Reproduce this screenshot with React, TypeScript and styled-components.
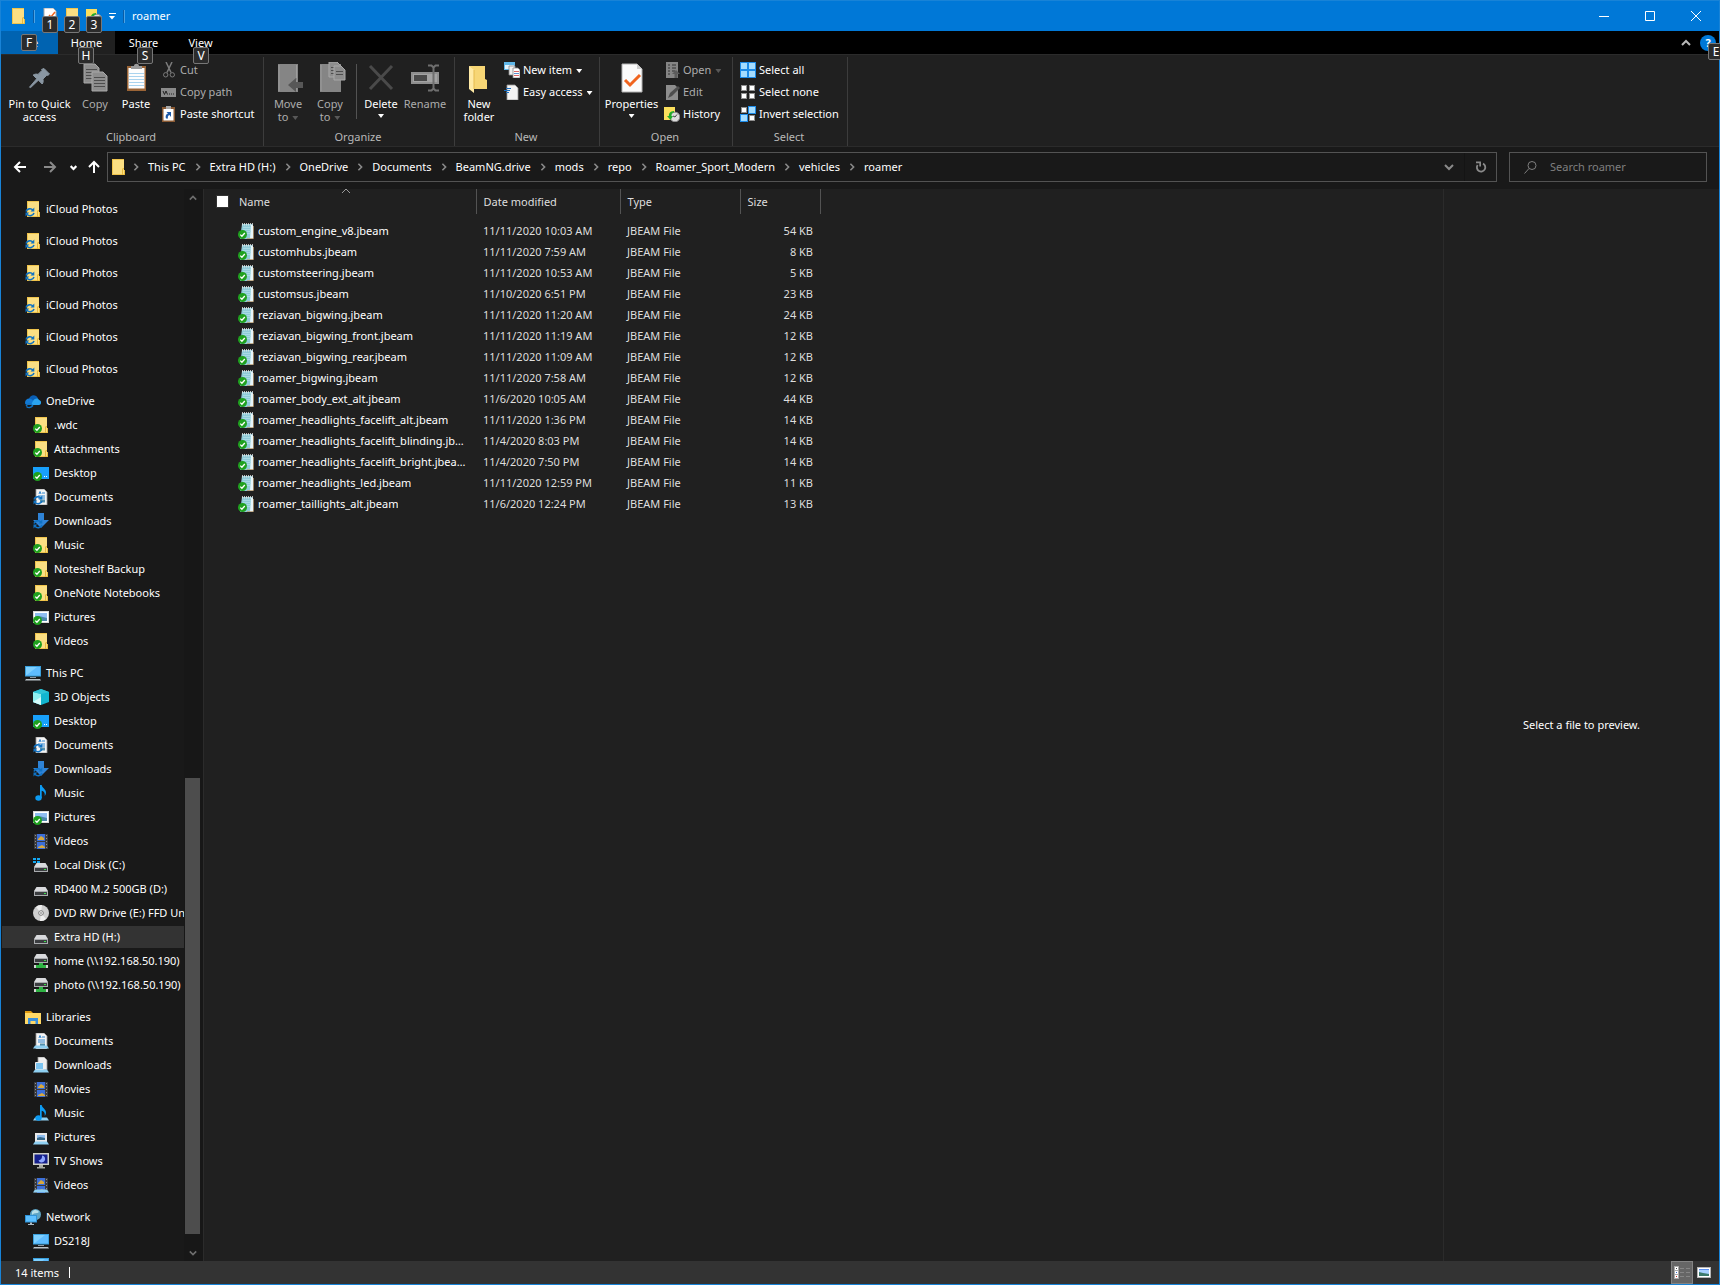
import React from "react";
import styled, { createGlobalStyle, css } from "styled-components";

const color = {
  accent: "#0078d7",
  edge: "#1883d7",
  panel: "#202020",
  chrome: "#191919",
  line: "#2b2b2b",
  box: "#535353",
  text: "#ffffff",
  dim: "#adadad",
};

const GlobalStyle = createGlobalStyle`
  *, *::before, *::after { box-sizing: border-box; }
  html, body { margin: 0; background: ${color.chrome}; overflow: hidden; }
  body, button, input, table {
    font-family: "Noto Sans", "Open Sans", "Segoe UI", sans-serif;
    font-size: 11px;
    line-height: 16px;
    color: ${color.text};
  }
  button { background: none; border: 0; padding: 0; margin: 0; }
  a { color: inherit; text-decoration: none; }
  ul, ol { list-style: none; margin: 0; padding: 0; }
  svg { display: block; flex: none; }
`;

const Window = styled.div`
  display: flex;
  flex-direction: column;
  height: 100vh;
  border: 1px solid ${color.edge};
  background: ${color.panel};
`;

/* ---------- Glyphs ---------- */

type IconName =
  | "folder" | "folderSync" | "folderOk" | "cloud" | "desktopOk" | "docSync" | "downSync" | "picOk"
  | "pc" | "cube" | "music" | "film" | "diskC" | "disk" | "dvd" | "net" | "libraries" | "docLib"
  | "downLib" | "musicLib" | "picLib" | "tv" | "filmLib" | "network" | "notepad"
  | "cut" | "copyPath" | "pasteShortcut" | "newItem" | "easyAccess" | "open" | "edit" | "history"
  | "selectAll" | "selectNone" | "invert" | "props";

const Ok = () => (
  <>
    <circle cx="4.5" cy="11.5" r="4.5" fill="#1fa11f" />
    <path d="M2.3 11.6l1.6 1.6 2.9-3.2" fill="none" stroke="#fff" strokeWidth="1.3" />
  </>
);
const Sync = () => (
  <>
    <path d="M1 10.5C2 7.5 6 6.8 8 9.3M9 12c-1 3-5 3.600-7 1.200" fill="none" stroke="#0f72c4" strokeWidth="1.6" />
    <path d="M9.300 6.500v4H5.500zM.5 15.500v-4h3.800z" fill="#0f72c4" />
  </>
);
const Folder = () => (
  <>
    <path d="M2 0h12v12l1 0v4H2z" fill="#fbdf83" />
    <path d="M2 .5h12M2.500 0v16M2 15.500h13" stroke="#f0c44c" fill="none" />
    <path d="M12 10h1.500v-1M12.500 10v6M14.500 11v5" stroke="#e8b93c" fill="none" />
  </>
);
const Screen = () => <path d="M0 2h16v12H0z" fill="#18a0fb" />;
const Page = () => (
  <>
    <path d="M3 0h8l3 3v13H3z" fill="#f4f4f4" stroke="#9a9a9a" strokeWidth=".8" />
    <path d="M6 5l1-2.500L8 5M9 4h3M5 7h7M5 9h7" stroke="#2f86d0" fill="none" />
    <path d="M7 10.500h5v3H7z" fill="#5590ad" />
  </>
);
const Down = () => <path d="M5 0h6v7h5l-8 8-8-8h5z" fill="#2f83d6" />;
const Picture = () => (
  <>
    <path d="M0 2h16v12H0z" fill="#d8d8d8" />
    <path d="M1 3h14v10H1z" fill="#fff" />
    <path d="M2 4h12v8H2z" fill="#8fbdf0" />
    <path d="M2 8l4-1 8 2v3H2z" fill="#4b86a8" />
  </>
);
const Film = () => (
  <>
    <path d="M1 1h14v15H1z" fill="#3a3a3c" />
    <path d="M4 1h8v7H4zM4 9h8v7H4z" fill="#3c6fd8" />
    <path d="M5 6l3-3 3 2v2H5zM5 14l4-2 3 2v1H5z" fill="#d9a93c" />
    <path d="M2.500 2v14M13.500 2v14" stroke="#8f8f8f" strokeDasharray="1 2" />
  </>
);
const Note = () => (
  <>
    <ellipse cx="5.500" cy="13" rx="3.200" ry="2.700" fill="#0c9bf2" />
    <path d="M7 0h1.700c.4 3 4.300 4 4.300 7.500 0 1.500-.6 2.500-1.300 3.500.5-3.400-1-4.600-3-5.200V13H7z" fill="#0c9bf2" />
  </>
);
const Disk = () => (
  <>
    <path d="M3.500 6h9L15 10H1z" fill="#d9dadd" />
    <path d="M1 10h14v5H1z" fill="#a9abae" />
    <path d="M2 11h12v3H2z" fill="#3b3d40" />
    <path d="M11 12h2v1h-2z" fill="#3de04b" />
  </>
);
const Stand = () => <path d="M2 12.500h12l2 3H0z" fill="#8fd0f2" />;
const Display = () => (
  <>
    <path d="M0 1h16v10.500H0z" fill="#3aa0dc" />
    <path d="M1 2h14v8.500H1z" fill="#5ebcff" />
    <path d="M1 10.500V2h11z" fill="#7fd0ff" />
    <path d="M5 12h6v1H5z" fill="#8f9aa3" />
    <path d="M1 14h14l1 1.500H0z" fill="#b9c3ca" />
  </>
);
const Tile = ({ x, y, on }: { x: number; y: number; on?: boolean }) => (
  <>
    <rect x={x} y={y} width={on ? 8 : 6} height={on ? 8 : 6} fill={on ? "#1d8be8" : "#8f8f8f"} />
    <rect x={x + 1} y={y + 1} width={on ? 6 : 4} height={on ? 6 : 4} fill={on ? "#a4dcff" : "#fff"} />
  </>
);

const glyphs: Record<IconName, React.ReactNode> = {
  folder: <Folder />,
  folderSync: <><Folder /><Sync /></>,
  folderOk: <><Folder /><Ok /></>,
  cloud: (
    <>
      <path d="M4 6C5 1.500 11 .5 13 5.500L9 9z" fill="#0a5fb5" />
      <path d="M0 10c0-4 4-5.500 7-3.500L12 12H3c-2 0-3-.8-3-2z" fill="#1279d4" />
      <path d="M8 8c2-3 5-3 6-1 3 .5 2.600 5 0 5H6z" fill="#2aa2ee" />
      <path d="M1 13c2-3 5-3 7 0M8 12.500c-2 2.500-5 2.500-6.500 1" fill="none" stroke="#0f72c4" strokeWidth="1.300" />
    </>
  ),
  desktopOk: <><Screen /><path d="M11 11.500h1M13 11.500h1" stroke="#fff" /><Ok /></>,
  docSync: <><Page /><Sync /></>,
  downSync: <><Down /><Sync /></>,
  picOk: <><Picture /><Ok /></>,
  pc: <Display />,
  cube: (
    <>
      <path d="M8 0l8 3v10l-8 3-8-3V3z" fill="#12b5cf" />
      <path d="M0 3l8 2v11l-8-3z" fill="#8ff0f0" />
      <path d="M8 0l8 3-8 2-8-2z" fill="#2fc3d6" />
      <path d="M0 13l8-5v8z" fill="#d5fbfa" />
    </>
  ),
  music: <Note />,
  film: <Film />,
  diskC: <><Disk /><path d="M0 1h3v2H0zM4 1h3v2H4zM0 4h3v2H0zM4 4h3v2H4z" fill="#14a9f4" /></>,
  disk: <Disk />,
  dvd: (
    <>
      <circle cx="8" cy="8" r="8" fill="#cfcfcf" />
      <path d="M8 8L3 2a8 8 0 0 1 6-2zM8 8l5 6a8 8 0 0 1-6 2z" fill="#ededed" />
      <circle cx="8" cy="8" r="2.300" fill="#fff" stroke="#777" />
      <circle cx="8" cy="8" r=".8" fill="#555" />
    </>
  ),
  net: (
    <>
      <path d="M3.500 1h9L15 5H1z" fill="#d9dadd" />
      <path d="M1 5h14v5H1z" fill="#a9abae" />
      <path d="M2 6h12v3H2z" fill="#3b3d40" />
      <path d="M11 7h2v1h-2z" fill="#3de04b" />
      <path d="M6 10h4v2h5v3H1v-3h5z" fill="#2fb344" />
      <path d="M1 12h2v3H1zM13 12h2v3h-2z" fill="#d5d5d5" />
    </>
  ),
  libraries: (
    <>
      <path d="M0 2h6l2 2H0z" fill="#e09a10" />
      <path d="M0 4h16v11H0z" fill="#ffd866" />
      <path d="M3 9h10v6h-2.500v-3h-5v3H3z" fill="#3a8fdc" />
    </>
  ),
  docLib: <><Page /><Stand /></>,
  downLib: (
    <>
      <path d="M5 0h6l3 3v10H5z" fill="#eee" stroke="#999" strokeWidth=".8" />
      <path d="M2.500 5.500h8v7h-8z" fill="#7cc4f0" stroke="#eee" />
      <Stand />
    </>
  ),
  musicLib: <><Stand /><Note /></>,
  picLib: (
    <>
      <path d="M2 4h12v9H2z" fill="#e9e9e9" />
      <path d="M4 6h8v5H4z" fill="#8fbdf0" />
      <path d="M4 9l3-1 5 1v2H4z" fill="#35688a" />
      <Stand />
    </>
  ),
  tv: (
    <>
      <path d="M0 0h16v12H0z" fill="#cfd0c8" />
      <path d="M1.500 1.500h13v9h-13z" fill="#16208c" />
      <path d="M9 2.500a3.500 3.500 0 1 1-3.500 5A4.500 4.500 0 0 0 9 2.500z" fill="#8ea6ff" />
      <path d="M6 12h4v2h2v1.500H4V14h2z" fill="#a9aaa2" />
    </>
  ),
  filmLib: <><Film /><Stand /></>,
  network: (
    <>
      <circle cx="10.500" cy="5.500" r="5.500" fill="#5fa5c4" />
      <path d="M7 3c2-3 6-2 7 0-2 2-4 0-7 3z" fill="#b8dfe8" />
      <path d="M0 6h12v7.500H0z" fill="#2f93d8" />
      <path d="M1 7h10v5.500H1z" fill="#5ec0ff" />
      <path d="M5 13.500h2V15h2v1H3v-1h2z" fill="#a9b8c2" />
    </>
  ),
  notepad: (
    <>
      <path d="M4 1h10.500v15H2z" fill="#8fcbd8" />
      <path d="M13 2h2v14h-3z" fill="#e8f6fa" />
      <path d="M15.500 3v12.500H9" fill="none" stroke="#b89c74" strokeWidth=".8" />
      <path d="M5 4.500h8M5 6.500h8M5 8.500h8M5 10.500h7" stroke="#a9dbe5" />
      <path d="M4.500 0v2.500M6.500 0v2.500M8.500 0v2.500M10.500 0v2.500M12.500 0v2.500M14.500 0v2.500" stroke="#e6e6e6" strokeWidth=".8" />
      <Ok />
    </>
  ),
  cut: (
    <g fill="none" stroke="#7c7c7c">
      <path d="M5 0l5 10.500M11 0L6 10.500" strokeWidth="1.500" />
      <circle cx="4.700" cy="12.800" r="2.200" />
      <circle cx="11.300" cy="12.800" r="2.200" />
    </g>
  ),
  copyPath: (
    <>
      <path d="M0 4h15v9H0z" fill="#8b8b8b" />
      <path d="M2 7l1.500 3.500L5 7l1.500 3.500M8 10h1M10 10h1M12 10h1" stroke="#222" fill="none" />
    </>
  ),
  pasteShortcut: (
    <>
      <path d="M1 1h13v15H1z" fill="#8a5a33" />
      <path d="M2.500 3h10v11.500h-10z" fill="#fff" />
      <path d="M5 0h5v3H5z" fill="#a8a8a8" />
      <path d="M5 12.500c-1-3 .5-4.500 2-5L5.500 6H10v5L8.500 9C7 9.500 6.500 10.500 7 12.500z" fill="#1f5aa8" />
    </>
  ),
  newItem: (
    <>
      <path d="M0 0h11v8H0z" fill="#5fb7e8" />
      <path d="M1 3h9v4H1z" fill="#e5f4fc" />
      <path d="M5 4h6v9H5z" fill="#f2f2f2" stroke="#888" strokeWidth=".8" />
      <path d="M9 6h5l2 2v8H9z" fill="#fff" stroke="#888" strokeWidth=".8" />
      <path d="M10 9.500h5M10 13.500h5" stroke="#d66" />
      <path d="M10 11.500h5" stroke="#5a90d0" />
    </>
  ),
  easyAccess: (
    <>
      <path d="M3 1h8l3 3v12H3z" fill="#f4f4f4" stroke="#9a9a9a" strokeWidth=".8" />
      <path d="M2 4.500h5M0 6.500h6M2 8.500h3" stroke="#1b6fc0" />
    </>
  ),
  open: (
    <>
      <path d="M2 0h12v16H2z" fill="#858585" />
      <path d="M4 3h2M8 3h4M4 6h2M8 6h4M4 9h2M8 9h3M4 12h2" stroke="#333" />
      <path d="M12 8l4 4h-2.500v4h-3v-4H8z" fill="#5c5c5c" />
    </>
  ),
  edit: (
    <>
      <path d="M2 1h9l3 3v12H2z" fill="#8d8d8d" />
      <path d="M4 14l2-5 8-7 2 2-8 8z" fill="#4e4e4e" />
    </>
  ),
  history: (
    <>
      <path d="M0 1h11v13H0z" fill="#fbdf5c" />
      <circle cx="11" cy="11" r="4.800" fill="#dcdcdc" stroke="#8c8c8c" />
      <path d="M11 11l2-2.500M11 11l-2-1" stroke="#444" />
      <path d="M10 5C6 5 4.500 8 5 10H3l3.500 4L9 10H7.500C7.300 8 8 6.500 10 6.500z" fill="#1faa2a" />
    </>
  ),
  selectAll: <><Tile x={0} y={0} on /><Tile x={8} y={0} on /><Tile x={0} y={8} on /><Tile x={8} y={8} on /></>,
  selectNone: <><Tile x={1} y={1} /><Tile x={9} y={1} /><Tile x={1} y={9} /><Tile x={9} y={9} /></>,
  invert: <><Tile x={1} y={1} /><Tile x={8} y={0} on /><Tile x={0} y={8} on /><Tile x={9} y={9} /></>,
  props: (
    <>
      <path d="M2 0h9l3 3v12H2z" fill="#fff" stroke="#aaa" />
      <path d="M7 7l2 2 4-5" fill="none" stroke="#f0641e" strokeWidth="1.500" />
    </>
  ),
};

const Icon = ({ name }: { name: IconName }) => (
  <svg width="16" height="16" viewBox="0 0 16 16" aria-hidden="true">{glyphs[name]}</svg>
);

const Chevron = styled.svg.attrs<{ $dir: "up" | "down" | "right" }>((p) => ({
  viewBox: "0 0 10 10",
  "aria-hidden": true,
  children: (
    <path
      d={{ up: "M1 7l4-4 4 4", down: "M1 3l4 4 4-4", right: "M3 1l4 4-4 4" }[p.$dir]}
      fill="none"
      stroke="currentColor"
      strokeWidth="inherit"
    />
  ),
}))<{ $dir: "up" | "down" | "right"; $size?: number; $weight?: number }>`
  width: ${(p) => p.$size ?? 10}px;
  height: ${(p) => p.$size ?? 10}px;
  stroke-width: ${(p) => p.$weight ?? 2};
`;

const Arrow = styled.span<{ $block?: boolean }>`
  width: 6px;
  height: 4px;
  background: currentColor;
  clip-path: polygon(0 0, 100% 0, 50% 100%);
  ${(p) => (p.$block ? css`display: block; margin: 4px auto 0;` : css`display: inline-block; margin-left: 4px; vertical-align: middle;`)}
`;

const KeyTip = styled.span<{ $x: number; $y: number }>`
  position: absolute;
  z-index: 2;
  left: ${(p) => p.$x}px;
  top: ${(p) => p.$y}px;
  width: 16px;
  height: 17px;
  border: 1px solid #777;
  border-radius: 2px;
  background: ${color.line};
  color: #fff;
  text-align: center;
  font-size: 12px;
  font-weight: 400;
  line-height: 15px;
`;

/* ---------- Title bar ---------- */

const TitleBar = styled.header`
  display: flex;
  align-items: center;
  height: 30px;
  flex: none;
  padding-left: 9px;
  background: ${color.accent};
`;
const QuickAccess = styled.div`
  display: flex;
  align-items: center;
  gap: 6px;
`;
const Divider = styled.span`
  width: 2px;
  height: 13px;
  margin: 0 7px;
  background: #4aa3e6;
  border-left: 1px solid #0a5ca6;
`;
const QuickButton = styled.button`
  position: relative;
  display: block;
`;
const MoreButton = styled.button`
  display: grid;
  justify-items: center;
  gap: 2px;
  width: 8px;
  &::before { content: ""; width: 7px; height: 1px; background: #fff; }
`;
const MoreArrow = styled.span`
  width: 7px;
  height: 4px;
  background: #fff;
  clip-path: polygon(0 0, 100% 0, 50% 100%);
`;
const Title = styled.h1`
  margin: 0;
  font-size: 11px;
  font-weight: 400;
  line-height: 16px;
`;
const Controls = styled.div`
  display: flex;
  margin-left: auto;
`;
const ControlButton = styled.button`
  display: grid;
  place-items: center;
  width: 46px;
  height: 30px;
`;

/* ---------- Tabs ---------- */

const TabBar = styled.nav`
  display: flex;
  height: 23px;
  flex: none;
  background: #000;
`;
const Tab = styled.button<{ $kind?: "file" | "active" }>`
  position: relative;
  width: 57px;
  background: ${(p) => (p.$kind === "file" ? "#0063b1" : p.$kind === "active" ? color.panel : "none")};
`;
const TabTools = styled.div`
  display: flex;
  align-items: center;
  margin-left: auto;
  gap: 9px;
  padding-right: 3px;
  color: #b8b8b8;
`;
const HelpButton = styled.button`
  position: relative;
  width: 16px;
  height: 16px;
  border-radius: 50%;
  background: ${color.accent};
  font-weight: 700;
`;

/* ---------- Ribbon ---------- */

const Ribbon = styled.section`
  display: flex;
  height: 93px;
  flex: none;
  border: solid ${color.line};
  border-width: 1px 0;
  padding-top: 2px;
  background: ${color.panel};
`;
const Group = styled.section<{ $width: number }>`
  display: grid;
  grid-template-rows: 72px 16px;
  width: ${(p) => p.$width}px;
  border-right: 1px solid #3c3c3c;
`;
const GroupBody = styled.div`
  display: flex;
  padding: 2px 0 0 3px;
`;
const GroupLabel = styled.h2`
  margin: 0;
  padding-right: 2px;
  font-size: 11px;
  font-weight: 400;
  line-height: 16px;
  text-align: center;
  color: #b9b9b9;
`;
const BigButton = styled.button<{ $width?: number }>`
  display: flex;
  flex-direction: column;
  align-items: center;
  gap: 3px;
  width: ${(p) => p.$width ?? 42}px;
  padding-top: 3px;
  line-height: 13px;
  white-space: nowrap;
  &:disabled { color: ${color.dim}; }
  &:disabled ${Arrow} { opacity: .4; }
`;
const SmallStack = styled.div`
  display: flex;
  flex-direction: column;
  padding-left: 4px;
`;
const SmallButton = styled.button`
  display: flex;
  align-items: center;
  gap: 3px;
  height: 22px;
  white-space: nowrap;
  &:disabled { color: ${color.dim}; }
  &:disabled ${Arrow} { opacity: .4; }
`;
const BodyRule = styled.span`
  width: 1px;
  height: 55px;
  margin: 5px 3px 0 5px;
  background: ${color.box};
`;

const Big = ({ art }: { art: React.ReactNode }) => (
  <svg width="32" height="32" viewBox="0 0 32 32" aria-hidden="true">{art}</svg>
);

const greyPage = (x: number, y: number, w: number, h: number) => (
  <>
    <path d={`M${x} ${y}h${w - 4}l4 4v${h - 4}h-${w}z`} fill="#8d8d8d" stroke="#a8a8a8" />
    {Array.from({ length: Math.floor((h - 6) / 3) }, (_, i) => (
      <path key={i} d={`M${x + 2} ${y + 5.5 + i * 3}h${w - 4}`} stroke="#4e4e4e" />
    ))}
  </>
);

const art = {
  pin: (
    <path
      d="M20 6.500l5.500 5.500-1.600 1.400-1-.3-4 4c.6 1.800.3 3.600-.7 4.900l-3.800-3.800-7.700 7.300-1.200-.3 7.200-8.500-3.600-3.600c1.500-1 3.200-1.300 4.900-.7l4-4-.4-1z"
      fill="#8a97a3"
      stroke="#8a97a3"
    />
  ),
  copy: <>{greyPage(5, 2, 15, 19)}{greyPage(13, 10, 15, 19)}</>,
  paste: (
    <>
      <path d="M7 4h19v25H7z" fill="#9a6436" />
      <path d="M8.500 6h16v20.500h-16z" fill="#fdfdfd" />
      <path d="M9 11.500h15M9 14.500h15M9 17.500h15M9 20.500h15M9 23.500h15" stroke="#a9d3ee" />
      <path d="M11 4h3c0-3 5-3 5 0h3v3H11z" fill="#9b9b9b" />
    </>
  ),
  move: (
    <>
      <path d="M6 2h20v28H6z" fill="#858585" />
      <path d="M7 3v26M24.500 3v13M24 18v11" stroke="#9d9d9d" />
      <path d="M16 23l8-7v4h7v6h-7v4z" fill="#575757" />
    </>
  ),
  copyTo: (
    <>
      <path d="M6 2h21v28H6z" fill="#858585" />
      <path d="M7 3v26" stroke="#9d9d9d" />
      {greyPage(15, 0, 12, 15)}
      {greyPage(20, 4, 11, 14)}
    </>
  ),
  del: <path d="M5 4l22 23M27 4L5 27" stroke="#4a4a4a" strokeWidth="3" />,
  rename: (
    <>
      <path d="M2 10h28v12H2z" fill="#8f8f8f" />
      <path d="M4 12h24v8H4z" fill="#a3a3a3" />
      <path d="M5 13h13v6H5z" fill="#4a4a4a" />
      <path d="M19 3.500h3.500l2 2 2-2H30M24.500 5v22M19 28.500h3.500l2-2 2 2H30" stroke="#6f6f6f" strokeWidth="2" fill="none" />
    </>
  ),
  newFolder: (
    <>
      <path d="M6 4h16v13l2 1v9H10z" fill="#f7d675" />
      <path d="M6 4l5 4v23l-5-4z" fill="#ffeaa5" />
      <path d="M11 8v19" stroke="#e5bb4e" />
    </>
  ),
  properties: (
    <>
      <path d="M6 2h15l5 5v23H6z" fill="#fbfbfb" stroke="#b3b3b3" />
      <path d="M21 2v5h5z" fill="#cfcfcf" />
      <path d="M9 18l5 5 10-10" fill="none" stroke="#f0641e" strokeWidth="3" />
    </>
  ),
};

/* ---------- Address row ---------- */

const AddressRow = styled.div`
  display: flex;
  align-items: center;
  height: 42px;
  flex: none;
  padding: 0 12px 2px 4px;
  background: ${color.chrome};
`;
const NavButton = styled.button<{ $width: number }>`
  display: grid;
  place-items: center;
  width: ${(p) => p.$width}px;
  height: 30px;
  flex: none;
  &:disabled { color: #8a8a8a; }
`;
const AddressBox = styled.div`
  display: flex;
  align-items: center;
  flex: 1;
  min-width: 0;
  height: 30px;
  margin: 0 12px 0 1px;
  border: 1px solid ${color.box};
  padding-left: 2px;
`;
const Crumbs = styled.ol`
  display: flex;
  flex: 1;
  min-width: 0;
`;
const Crumb = styled.li`
  display: flex;
  align-items: center;
  gap: 8px;
  padding: 0 2px 0 6px;
  white-space: nowrap;
  & > svg { color: #8a8a8a; }
`;
const BoxButton = styled.button<{ $ruled?: boolean }>`
  display: grid;
  place-items: center;
  align-self: stretch;
  width: 32px;
  color: #8a8a8a;
  border-left: 1px solid ${(p) => (p.$ruled ? "#141414" : "transparent")};
`;
const SearchBox = styled.label`
  display: flex;
  align-items: center;
  gap: 13px;
  width: 198px;
  height: 30px;
  flex: none;
  border: 1px solid ${color.box};
  padding-left: 14px;
`;
const SearchInput = styled.input`
  flex: 1;
  min-width: 0;
  border: 0;
  padding: 0;
  background: none;
  outline: none;
  &::placeholder { color: #7f7f7f; opacity: 1; }
`;

/* ---------- Main area ---------- */

const Main = styled.div`
  display: flex;
  flex: 1;
  min-height: 0;
`;
const Sidebar = styled.aside`
  display: flex;
  width: 203px;
  flex: none;
  border-right: 1px solid ${color.line};
  background: ${color.chrome};
`;
const Tree = styled.ul`
  flex: 1;
  min-width: 0;
  overflow: hidden;
`;
const TreeItem = styled.li<{ $root?: boolean }>`
  padding: 1px 0;
  ${(p) => p.$root && css`margin-top: 8px;`}
`;
const TreeLink = styled.a<{ $root?: boolean; $current?: boolean }>`
  display: flex;
  align-items: center;
  gap: 5px;
  height: 22px;
  margin-left: 1px;
  padding-left: ${(p) => (p.$root ? 23 : 31)}px;
  white-space: nowrap;
  overflow: hidden;
  background: ${(p) => (p.$current ? "#333" : "none")};
`;
const ScrollBar = styled.div`
  display: flex;
  flex-direction: column;
  width: 19px;
  padding: 0 3px 0 1px;
  background: #171717;
`;
const ScrollButton = styled.button`
  display: grid;
  place-items: center;
  height: 17px;
  flex: none;
  color: #6e6e6e;
`;
const ScrollSpace = styled.span<{ $grow: number; $thumb?: boolean }>`
  flex: ${(p) => p.$grow} 0 0;
  background: ${(p) => (p.$thumb ? "#4d4d4d" : "none")};
`;

const Files = styled.main`
  flex: 1;
  min-width: 0;
`;
const FileTable = styled.table`
  table-layout: fixed;
  width: 616px;
  border-collapse: collapse;
`;
const Column = styled.col<{ $width: number }>`
  width: ${(p) => p.$width}px;
`;
const HeadRow = styled.tr`
  height: 25px;
`;
const HeadCell = styled.th`
  position: relative;
  padding: 0 0 0 7px;
  border-right: 1px solid ${color.box};
  font-weight: 400;
  text-align: left;
  color: #dedede;
`;
const HeadContent = styled.div`
  display: flex;
  align-items: center;
  gap: 10px;
  padding-left: 5px;
`;
const HeadButton = styled.button`
  color: inherit;
`;
const SortMark = styled.span`
  position: absolute;
  left: 137px;
  top: -3px;
  color: #9a9a9a;
`;
const CheckBox = styled.input`
  appearance: none;
  width: 13px;
  height: 13px;
  margin: 0;
  border: 1px solid #333;
  background: #fff;
`;
const Spacer = styled.tr`
  height: 6px;
`;
const FileRow = styled.tr`
  height: 21px;
`;
const Cell = styled.td<{ $right?: boolean }>`
  padding: 0 7px;
  color: #dedede;
  white-space: nowrap;
  text-align: ${(p) => (p.$right ? "right" : "left")};
`;
const NameCell = styled.td`
  padding: 0 10px 0 34px;
`;
const FileName = styled.span`
  display: flex;
  align-items: center;
  gap: 4px;
`;
const FileLabel = styled.span`
  overflow: hidden;
  white-space: nowrap;
  text-overflow: ellipsis;
`;
const Preview = styled.aside`
  display: grid;
  place-items: center;
  width: 276px;
  flex: none;
  border-left: 1px solid ${color.line};
`;

/* ---------- Status bar ---------- */

const StatusBar = styled.footer`
  display: flex;
  align-items: center;
  height: 23px;
  flex: none;
  padding: 0 4px 0 14px;
  background: #333;
`;
const Count = styled.span`
  padding-right: 10px;
  border-right: 1px solid #fff;
  line-height: 11px;
`;
const Views = styled.div`
  display: flex;
  align-self: stretch;
  margin-left: auto;
`;
const ViewButton = styled.button<{ $on?: boolean }>`
  display: grid;
  place-items: center;
  width: 22px;
  border: 1px solid ${(p) => (p.$on ? "#838383" : "transparent")};
  background: ${(p) => (p.$on ? "#666" : "none")};
`;

/* ---------- Data ---------- */

type Node = { label: string; icon: IconName; root?: boolean; current?: boolean };
const root = (icon: IconName, label: string): Node => ({ icon, label, root: true });
const leaf = (icon: IconName, label: string): Node => ({ icon, label });

const tree: Node[] = [
  ...Array.from({ length: 6 }, () => root("folderSync", "iCloud Photos")),
  root("cloud", "OneDrive"),
  leaf("folderOk", ".wdc"),
  leaf("folderOk", "Attachments"),
  leaf("desktopOk", "Desktop"),
  leaf("docSync", "Documents"),
  leaf("downSync", "Downloads"),
  leaf("folderOk", "Music"),
  leaf("folderOk", "Noteshelf Backup"),
  leaf("folderOk", "OneNote Notebooks"),
  leaf("picOk", "Pictures"),
  leaf("folderOk", "Videos"),
  root("pc", "This PC"),
  leaf("cube", "3D Objects"),
  leaf("desktopOk", "Desktop"),
  leaf("docSync", "Documents"),
  leaf("downSync", "Downloads"),
  leaf("music", "Music"),
  leaf("picOk", "Pictures"),
  leaf("film", "Videos"),
  leaf("diskC", "Local Disk (C:)"),
  leaf("disk", "RD400 M.2 500GB (D:)"),
  leaf("dvd", "DVD RW Drive (E:) FFD Universal"),
  { icon: "disk", label: "Extra HD (H:)", current: true },
  leaf("net", "home (\\\\192.168.50.190)"),
  leaf("net", "photo (\\\\192.168.50.190)"),
  root("libraries", "Libraries"),
  leaf("docLib", "Documents"),
  leaf("downLib", "Downloads"),
  leaf("film", "Movies"),
  leaf("musicLib", "Music"),
  leaf("picLib", "Pictures"),
  leaf("tv", "TV Shows"),
  leaf("filmLib", "Videos"),
  root("network", "Network"),
  leaf("pc", "DS218J"),
  leaf("pc", "HOSTUDS_GAMES"),
];

const crumbs = ["This PC", "Extra HD (H:)", "OneDrive", "Documents", "BeamNG.drive", "mods", "repo", "Roamer_Sport_Modern", "vehicles", "roamer"];

const files = [
  ["custom_engine_v8.jbeam", "11/11/2020 10:03 AM", "54 KB"],
  ["customhubs.jbeam", "11/11/2020 7:59 AM", "8 KB"],
  ["customsteering.jbeam", "11/11/2020 10:53 AM", "5 KB"],
  ["customsus.jbeam", "11/10/2020 6:51 PM", "23 KB"],
  ["reziavan_bigwing.jbeam", "11/11/2020 11:20 AM", "24 KB"],
  ["reziavan_bigwing_front.jbeam", "11/11/2020 11:19 AM", "12 KB"],
  ["reziavan_bigwing_rear.jbeam", "11/11/2020 11:09 AM", "12 KB"],
  ["roamer_bigwing.jbeam", "11/11/2020 7:58 AM", "12 KB"],
  ["roamer_body_ext_alt.jbeam", "11/6/2020 10:05 AM", "44 KB"],
  ["roamer_headlights_facelift_alt.jbeam", "11/11/2020 1:36 PM", "14 KB"],
  ["roamer_headlights_facelift_blinding.jbeam", "11/4/2020 8:03 PM", "14 KB"],
  ["roamer_headlights_facelift_bright.jbeam", "11/4/2020 7:50 PM", "14 KB"],
  ["roamer_headlights_led.jbeam", "11/11/2020 12:59 PM", "11 KB"],
  ["roamer_taillights_alt.jbeam", "11/6/2020 12:24 PM", "13 KB"],
];

export default function App() {
  return (
    <Window>
      <GlobalStyle />
      <TitleBar>
        <Icon name="folder" />
        <Divider />
        <QuickAccess>
          <QuickButton aria-label="Properties"><Icon name="props" /><KeyTip $x={0} $y={8}>1</KeyTip></QuickButton>
          <QuickButton aria-label="New folder"><Icon name="folder" /><KeyTip $x={0} $y={8}>2</KeyTip></QuickButton>
          <QuickButton aria-label="History"><Icon name="history" /><KeyTip $x={0} $y={8}>3</KeyTip></QuickButton>
          <MoreButton aria-label="Customize Quick Access Toolbar"><MoreArrow /></MoreButton>
        </QuickAccess>
        <Divider />
        <Title>roamer</Title>
        <Controls>
          <ControlButton aria-label="Minimize">
            <svg width="10" height="10"><path d="M0 5.500h10" stroke="#fff" /></svg>
          </ControlButton>
          <ControlButton aria-label="Maximize">
            <svg width="10" height="10"><path d="M.5.5h9v9h-9z" stroke="#fff" fill="none" /></svg>
          </ControlButton>
          <ControlButton aria-label="Close">
            <svg width="10" height="10"><path d="M0 0l10 10M10 0L0 10" stroke="#fff" /></svg>
          </ControlButton>
        </Controls>
      </TitleBar>

      <TabBar>
        <Tab $kind="file">File<KeyTip $x={20} $y={3}>F</KeyTip></Tab>
        <Tab $kind="active">Home<KeyTip $x={20} $y={16}>H</KeyTip></Tab>
        <Tab>Share<KeyTip $x={22} $y={16}>S</KeyTip></Tab>
        <Tab>View<KeyTip $x={21} $y={16}>V</KeyTip></Tab>
        <TabTools>
          <Chevron $dir="up" />
          <HelpButton aria-label="Help">?<KeyTip $x={8} $y={8}>E</KeyTip></HelpButton>
        </TabTools>
      </TabBar>

      <Ribbon>
        <Group $width={263}>
          <GroupBody>
            <BigButton $width={71}><Big art={art.pin} /><span>Pin to Quick<br />access</span></BigButton>
            <BigButton $width={40} disabled><Big art={art.copy} /><span>Copy</span></BigButton>
            <BigButton><Big art={art.paste} /><span>Paste</span></BigButton>
            <SmallStack>
              <SmallButton disabled><Icon name="cut" />Cut</SmallButton>
              <SmallButton disabled><Icon name="copyPath" />Copy path</SmallButton>
              <SmallButton><Icon name="pasteShortcut" />Paste shortcut</SmallButton>
            </SmallStack>
          </GroupBody>
          <GroupLabel>Clipboard</GroupLabel>
        </Group>
        <Group $width={191}>
          <GroupBody>
            <BigButton disabled><Big art={art.move} /><span>Move<br />to<Arrow /></span></BigButton>
            <BigButton disabled><Big art={art.copyTo} /><span>Copy<br />to<Arrow /></span></BigButton>
            <BodyRule />
            <BigButton><Big art={art.del} /><span>Delete<Arrow $block /></span></BigButton>
            <BigButton $width={46} disabled><Big art={art.rename} /><span>Rename</span></BigButton>
          </GroupBody>
          <GroupLabel>Organize</GroupLabel>
        </Group>
        <Group $width={145}>
          <GroupBody>
            <BigButton><Big art={art.newFolder} /><span>New<br />folder</span></BigButton>
            <SmallStack>
              <SmallButton><Icon name="newItem" /><span>New item<Arrow /></span></SmallButton>
              <SmallButton><Icon name="easyAccess" /><span>Easy access<Arrow /></span></SmallButton>
            </SmallStack>
          </GroupBody>
          <GroupLabel>New</GroupLabel>
        </Group>
        <Group $width={133}>
          <GroupBody>
            <BigButton $width={57}><Big art={art.properties} /><span>Properties<Arrow $block /></span></BigButton>
            <SmallStack>
              <SmallButton disabled><Icon name="open" /><span>Open<Arrow /></span></SmallButton>
              <SmallButton disabled><Icon name="edit" />Edit</SmallButton>
              <SmallButton><Icon name="history" />History</SmallButton>
            </SmallStack>
          </GroupBody>
          <GroupLabel>Open</GroupLabel>
        </Group>
        <Group $width={115}>
          <GroupBody>
            <SmallStack>
              <SmallButton><Icon name="selectAll" />Select all</SmallButton>
              <SmallButton><Icon name="selectNone" />Select none</SmallButton>
              <SmallButton><Icon name="invert" />Invert selection</SmallButton>
            </SmallStack>
          </GroupBody>
          <GroupLabel>Select</GroupLabel>
        </Group>
      </Ribbon>

      <AddressRow>
        <NavButton $width={30} aria-label="Back">
          <svg width="14" height="12" viewBox="0 0 14 12"><path d="M7 1L2 6l5 5M2 6h11" fill="none" stroke="currentColor" strokeWidth="2" /></svg>
        </NavButton>
        <NavButton $width={30} aria-label="Forward" disabled>
          <svg width="14" height="12" viewBox="0 0 14 12"><path d="M7 1l5 5-5 5M12 6H1" fill="none" stroke="currentColor" strokeWidth="2" /></svg>
        </NavButton>
        <NavButton $width={17} aria-label="Recent locations"><Chevron $dir="down" $size={7} $weight={3} /></NavButton>
        <NavButton $width={24} aria-label="Up">
          <svg width="12" height="14" viewBox="0 0 12 14"><path d="M1 7l5-5 5 5M6 2v11" fill="none" stroke="currentColor" strokeWidth="2" /></svg>
        </NavButton>
        <AddressBox>
          <Icon name="folder" />
          <Crumbs>
            {crumbs.map((c) => (
              <Crumb key={c}>
                <Chevron $dir="right" $size={8} />
                <a href="#path">{c}</a>
              </Crumb>
            ))}
          </Crumbs>
          <BoxButton aria-label="Previous locations"><Chevron $dir="down" /></BoxButton>
          <BoxButton $ruled aria-label="Refresh">
            <svg width="12" height="12" viewBox="0 0 12 12">
              <path d="M8 2.600A4.200 4.200 0 1 1 2.600 4" fill="none" stroke="currentColor" strokeWidth="1.800" />
              <path d="M1 .5h5v5H4.300V2.200H1z" fill="currentColor" />
            </svg>
          </BoxButton>
        </AddressBox>
        <SearchBox>
          <svg width="13" height="13" viewBox="0 0 13 13" aria-hidden="true">
            <circle cx="8" cy="4.500" r="4" fill="none" stroke="#7f7f7f" />
            <path d="M5 7.500L.5 12.500" stroke="#7f7f7f" />
          </svg>
          <SearchInput type="search" placeholder="Search roamer" aria-label="Search roamer" />
        </SearchBox>
      </AddressRow>

      <Main>
        <Sidebar>
          <Tree>
            {tree.map((n, i) => (
              <TreeItem key={i} $root={n.root}>
                <TreeLink href="#location" $root={n.root} $current={n.current}>
                  <Icon name={n.icon} />
                  {n.label}
                </TreeLink>
              </TreeItem>
            ))}
          </Tree>
          <ScrollBar>
            <ScrollButton aria-label="Scroll up"><Chevron $dir="up" $size={8} /></ScrollButton>
            <ScrollSpace $grow={572} />
            <ScrollSpace $grow={456} $thumb />
            <ScrollSpace $grow={10} />
            <ScrollButton aria-label="Scroll down"><Chevron $dir="down" $size={8} /></ScrollButton>
          </ScrollBar>
        </Sidebar>

        <Files>
          <FileTable>
            <colgroup>
              <Column $width={272} />
              <Column $width={144} />
              <Column $width={120} />
              <Column $width={80} />
            </colgroup>
            <thead>
              <HeadRow>
                <HeadCell>
                  <HeadContent>
                    <CheckBox type="checkbox" aria-label="Select all items" />
                    <HeadButton>Name</HeadButton>
                  </HeadContent>
                  <SortMark><Chevron $dir="up" $weight={1} /></SortMark>
                </HeadCell>
                <HeadCell><HeadButton>Date modified</HeadButton></HeadCell>
                <HeadCell><HeadButton>Type</HeadButton></HeadCell>
                <HeadCell><HeadButton>Size</HeadButton></HeadCell>
              </HeadRow>
            </thead>
            <tbody>
              <Spacer />
              {files.map(([name, date, size]) => (
                <FileRow key={name}>
                  <NameCell>
                    <FileName><Icon name="notepad" /><FileLabel>{name}</FileLabel></FileName>
                  </NameCell>
                  <Cell>{date}</Cell>
                  <Cell>JBEAM File</Cell>
                  <Cell $right>{size}</Cell>
                </FileRow>
              ))}
            </tbody>
          </FileTable>
        </Files>

        <Preview>Select a file to preview.</Preview>
      </Main>

      <StatusBar>
        <Count>14 items</Count>
        <Views>
          <ViewButton $on aria-label="Details view">
            <svg width="16" height="14" viewBox="0 0 16 14">
              <path d="M0 0h5v13H0z" fill="#aaa" />
              <path d="M1 1h3v3H1zM1 5h3v3H1zM1 9h3v3H1z" fill="#fff" />
              <path d="M2 2h1v1H2z" fill="#444" /><path d="M2 6h1v1H2z" fill="#36c" /><path d="M2 10h1v1H2z" fill="#c22" />
              <path d="M6 2.500h4M12 2.500h4M6 6.500h4M12 6.500h4M6 10.500h4M12 10.500h4" stroke="#868686" />
            </svg>
          </ViewButton>
          <ViewButton aria-label="Large thumbnails">
            <svg width="14" height="11" viewBox="0 0 14 11">
              <path d="M0 0h14v11H0z" fill="#b5b5b5" />
              <path d="M1 1h12v9H1z" fill="#fff" />
              <path d="M2 2h10v7H2z" fill="#a9d0ff" />
              <path d="M2 2h10v1H2z" fill="#5b8ff0" />
              <path d="M2 5l4 1 6 1v2H2z" fill="#3c7a6b" />
            </svg>
          </ViewButton>
        </Views>
      </StatusBar>
    </Window>
  );
}
